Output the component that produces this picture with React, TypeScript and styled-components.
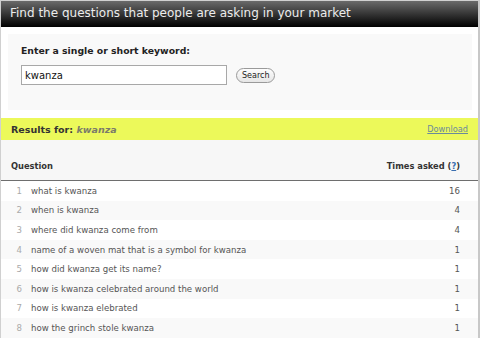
import React from "react";
import styled, { createGlobalStyle } from "styled-components";

const GlobalStyle = createGlobalStyle`
  html, body {
    margin: 0;
    padding: 0;
    background: #fff;
  }
  body {
    font-family: "DejaVu Sans", Verdana, sans-serif;
  }
`;

const rows = [
  { q: "what is kwanza", n: 16 },
  { q: "when is kwanza", n: 4 },
  { q: "where did kwanza come from", n: 4 },
  { q: "name of a woven mat that is a symbol for kwanza", n: 1 },
  { q: "how did kwanza get its name?", n: 1 },
  { q: "how is kwanza celebrated around the world", n: 1 },
  { q: "how is kwanza elebrated", n: 1 },
  { q: "how the grinch stole kwanza", n: 1 },
];

const App = () => {
  return (
    <>
      <GlobalStyle />
      <Frame>
        <Header>Find the questions that people are asking in your market</Header>
        <SearchArea>
          <SearchBox>
            <Label>Enter a single or short keyword:</Label>
            <SearchRow>
              <KeywordInput defaultValue="kwanza" />
              <SearchButton>Search</SearchButton>
            </SearchRow>
          </SearchBox>
        </SearchArea>
        <ResultsBar>
          <ResultsTitle>
            Results for: <em>kwanza</em>
          </ResultsTitle>
          <DownloadLink href="#">Download</DownloadLink>
        </ResultsBar>
        <TableHead>
          <span>Question</span>
          <span>
            Times asked (<HelpLink href="#">?</HelpLink>)
          </span>
        </TableHead>
        <List>
          {rows.map((row, idx) => (
            <Row key={idx} $odd={idx % 2 === 1}>
              <Num>{idx + 1}</Num>
              <QText>{row.q}</QText>
              <Count>{row.n}</Count>
            </Row>
          ))}
        </List>
      </Frame>
    </>
  );
};

const Frame = styled.div`
  width: 477px;
  height: 337px;
  border-top: 1px solid #d0d0d0;
  border-left: 1px solid #d0d0d0;
  border-right: 2px solid #c8c8c8;
  overflow: hidden;
  background: #fff;
`;

const Header = styled.div`
  height: 26px;
  line-height: 25px;
  padding-left: 9px;
  background: linear-gradient(#6a6a6a, #2a2a2a 60%, #000);
  color: #ececec;
  font-size: 12px;
`;

const SearchArea = styled.div`
  padding: 7px 6px 8px 7px;
`;

const SearchBox = styled.div`
  height: 76px;
  background: #f9f9f9;
  padding: 10px 0 0 13px;
  box-sizing: border-box;
`;

const Label = styled.div`
  font-size: 9.3px;
  font-weight: bold;
  color: #222;
  margin-top: 1px;
`;

const SearchRow = styled.div`
  display: flex;
  align-items: center;
  gap: 9px;
  margin-top: 9px;
`;

const KeywordInput = styled.input`
  width: 206px;
  height: 20px;
  box-sizing: border-box;
  border: 1px solid #a8a8a8;
  padding: 0 3px;
  font-family: "DejaVu Sans", Verdana, sans-serif;
  font-size: 10px;
  color: #111;
  background: #fff;
  outline: none;
`;

const SearchButton = styled.button`
  height: 15px;
  padding: 0 5px;
  border: 1px solid #9a9a9a;
  border-radius: 8px;
  background: linear-gradient(#fdfdfd, #e6e6e6);
  font-family: "DejaVu Sans", Verdana, sans-serif;
  font-size: 8px;
  color: #222;
  line-height: 13px;
`;

const ResultsBar = styled.div`
  height: 22px;
  background: #ecf95a;
  display: flex;
  align-items: center;
  justify-content: space-between;
  padding: 0 10px 0 10px;
`;

const ResultsTitle = styled.div`
  font-size: 9.5px;
  font-weight: bold;
  color: #333;

  em {
    color: #7b7b6a;
  }
`;

const DownloadLink = styled.a`
  font-size: 8.2px;
  color: #6b8a9a;
  text-decoration: underline;
`;

const TableHead = styled.div`
  height: 41px;
  background: #f7f7f7;
  border-bottom: 1px solid #6e6e6e;
  display: flex;
  align-items: flex-end;
  justify-content: space-between;
  padding: 0 18px 9px 10px;
  box-sizing: border-box;
  font-size: 8.3px;
  font-weight: bold;
  color: #333;
`;

const HelpLink = styled.a`
  color: #3b6fb0;
  text-decoration: underline;
`;

const List = styled.div`
  display: flex;
  flex-direction: column;
`;

const Row = styled.div<{ $odd: boolean }>`
  display: grid;
  grid-template-columns: 21px 1fr auto;
  align-items: center;
  height: 19.6px;
  padding-right: 18px;
  background: ${(p) => (p.$odd ? "#f9f9f9" : "#fff")};
  font-size: 8.6px;
  color: #555;
`;

const Num = styled.span`
  text-align: right;
  color: #aaa;
`;

const QText = styled.span`
  padding-left: 9px;
`;

const Count = styled.span`
  text-align: right;
`;

export default App;
